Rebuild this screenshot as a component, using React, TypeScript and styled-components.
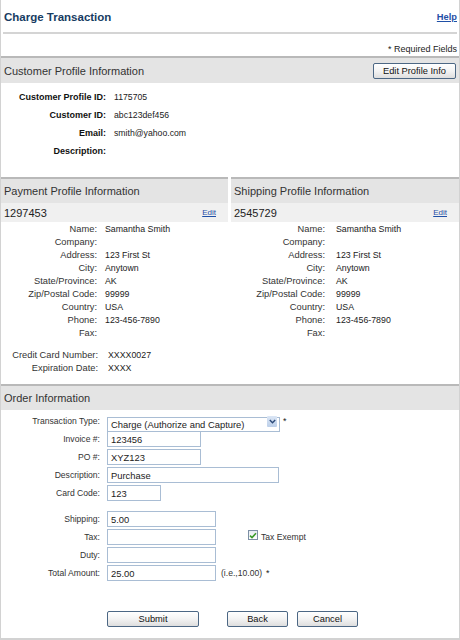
import React from "react";
import styled, { createGlobalStyle } from "styled-components";

const GlobalStyle = createGlobalStyle`
  html, body {
    margin: 0;
    padding: 0;
    background: #ffffff;
  }
  body {
    font-family: "Liberation Sans", Arial, sans-serif;
    color: #222;
  }
  * {
    box-sizing: border-box;
  }
`;

const Page = styled.div`
  width: 460px;
  height: 640px;
  border-left: 1px solid #d2d2d2;
  border-right: 1px solid #d2d2d2;
  border-bottom: 2px solid #d2d2d2;
  display: flex;
  flex-direction: column;
  overflow: hidden;
`;

const Header = styled.div`
  height: 32px;
  display: flex;
  align-items: center;
  justify-content: space-between;
  padding: 1px 2px 0 3px;
`;

const Title = styled.h1`
  margin: 0;
  font-size: 11.5px;
  font-weight: bold;
  color: #173c62;
`;

const HelpLink = styled.a`
  font-size: 9.3px;
  font-weight: bold;
  color: #1f4fa6;
  text-decoration: underline;
`;

const HeaderRule = styled.div`
  margin: 0 2px;
  height: 2px;
  background: #d4d4d4;
`;

const RequiredNote = styled.div`
  height: 22px;
  padding: 10px 2px 0 0;
  text-align: right;
  font-size: 9px;
  line-height: 11px;
  color: #222;
`;

const SectionBar = styled.div<{ $height?: number }>`
  height: ${(p) => p.$height ?? 27}px;
  border-top: 2px solid #b9b9b9;
  background: #e4e4e4;
  display: flex;
  align-items: center;
  justify-content: space-between;
  padding: 0 3px 0 3px;
  font-size: 11px;
  color: #333;
`;

const SubBar = styled.div`
  height: 19px;
  background: #f0f0f0;
  display: flex;
  align-items: center;
  justify-content: space-between;
  padding: 0 12px 0 3px;
  font-size: 11px;
  color: #222;
`;

const EditLink = styled.a`
  font-size: 8px;
  color: #1f4fa6;
  text-decoration: underline;
`;

const Button = styled.button<{ $width: number }>`
  width: ${(p) => p.$width}px;
  height: 16px;
  padding: 0;
  border: 1px solid #4c6784;
  border-radius: 2px;
  background: linear-gradient(#ffffff, #f3f3f3 50%, #dedede);
  font-family: "Liberation Sans", Arial, sans-serif;
  font-size: 9.3px;
  line-height: 14px;
  color: #111;
  cursor: pointer;
`;

const CustomerBlock = styled.div`
  height: 94px;
  padding-top: 5px;
  display: grid;
  grid-template-columns: 105px 1fr;
  grid-auto-rows: 18px;
  column-gap: 8px;
  align-items: center;
  align-content: start;
`;

const CustomerLabel = styled.div`
  text-align: right;
  font-size: 9px;
  font-weight: bold;
  color: #111;
`;

const CustomerValue = styled.div`
  font-size: 8.7px;
  color: #222;
`;

const Columns = styled.div`
  display: grid;
  grid-template-columns: 227px 1fr;
  column-gap: 3px;
`;

const Column = styled.div`
  display: flex;
  flex-direction: column;
`;

const DetailGrid = styled.div<{ $labelWidth: number; $gap: number }>`
  display: grid;
  grid-template-columns: ${(p) => p.$labelWidth}px 1fr;
  column-gap: ${(p) => p.$gap}px;
  grid-auto-rows: 13px;
  align-items: center;
`;

const DetailLabel = styled.div`
  text-align: right;
  font-size: 9.3px;
  color: #333;
  white-space: nowrap;
`;

const DetailValue = styled.div`
  font-size: 8.8px;
  color: #222;
  white-space: nowrap;
`;

const CardBlock = styled.div`
  padding: 9px 0 10px;
`;

const FormBlock = styled.div`
  padding-top: 3px;
  display: flex;
  flex-direction: column;
  gap: 2px;
`;

const FormRow = styled.div<{ $spaceBefore?: number }>`
  height: 16px;
  display: flex;
  align-items: center;
  margin-top: ${(p) => p.$spaceBefore ?? 0}px;
`;

const FormLabel = styled.label`
  width: 99px;
  margin-right: 7px;
  text-align: right;
  font-size: 8.6px;
  color: #333;
  white-space: nowrap;
`;

const TextInput = styled.input<{ $width: number }>`
  width: ${(p) => p.$width}px;
  height: 16px;
  margin: 0;
  padding: 0 3px;
  border: 1px solid #a9bdd4;
  border-radius: 0;
  background: #fff;
  font-family: "Liberation Sans", Arial, sans-serif;
  font-size: 9.4px;
  color: #222;
  outline: none;
`;

const SelectWrap = styled.div`
  position: relative;
  width: 173px;
  height: 15px;
`;

const Select = styled.select`
  appearance: none;
  width: 100%;
  height: 100%;
  margin: 0;
  padding: 0 0 0 3px;
  border: 1px solid #a9bdd4;
  border-radius: 0;
  background: #fff;
  font-family: "Liberation Sans", Arial, sans-serif;
  font-size: 9.4px;
  color: #222;
  outline: none;
`;

const SelectArrow = styled.span`
  position: absolute;
  top: 2px;
  right: 3px;
  width: 10px;
  height: 11px;
  background: linear-gradient(#dbe6f5, #bccfe9);
  border-radius: 1px;
  display: flex;
  align-items: center;
  justify-content: center;
  pointer-events: none;
`;

const Asterisk = styled.span<{ $left?: number }>`
  margin-left: ${(p) => p.$left ?? 3}px;
  font-size: 9px;
  color: #222;
`;

const Hint = styled.span`
  margin-left: 5px;
  font-size: 8.6px;
  color: #333;
`;

const CheckLabel = styled.label`
  margin-left: 32px;
  display: flex;
  align-items: center;
  gap: 3px;
  font-size: 8.6px;
  color: #333;
`;

const CheckBox = styled.span`
  width: 10px;
  height: 10px;
  margin-top: -4px;
  border: 1px solid #7d8fa5;
  background: linear-gradient(#e6ebf1, #ffffff);
  display: flex;
  align-items: center;
  justify-content: center;
`;

const ButtonRow = styled.div`
  margin-top: 30px;
  padding-left: 106px;
  display: flex;
  gap: 28px;
`;

const ButtonGroup = styled.div`
  display: flex;
  gap: 9px;
`;

type Pair = [string, string];

const addressRows: Pair[] = [
  ["Name:", "Samantha Smith"],
  ["Company:", ""],
  ["Address:", "123 First St"],
  ["City:", "Anytown"],
  ["State/Province:", "AK"],
  ["Zip/Postal Code:", "99999"],
  ["Country:", "USA"],
  ["Phone:", "123-456-7890"],
  ["Fax:", ""],
];

const customerRows: Pair[] = [
  ["Customer Profile ID:", "1175705"],
  ["Customer ID:", "abc123def456"],
  ["Email:", "smith@yahoo.com"],
  ["Description:", ""],
];

const Details: React.FC<{ rows: Pair[]; labelWidth: number; gap: number }> = ({
  rows,
  labelWidth,
  gap,
}) => (
  <DetailGrid $labelWidth={labelWidth} $gap={gap}>
    {rows.map(([label, value]) => (
      <React.Fragment key={label}>
        <DetailLabel>{label}</DetailLabel>
        <DetailValue>{value}</DetailValue>
      </React.Fragment>
    ))}
  </DetailGrid>
);

const App: React.FC = () => {
  return (
    <>
      <GlobalStyle />
      <Page>
        <Header>
          <Title>Charge Transaction</Title>
          <HelpLink href="#">Help</HelpLink>
        </Header>
        <HeaderRule />
        <RequiredNote>* Required Fields</RequiredNote>

        <SectionBar>
          <span>Customer Profile Information</span>
          <Button $width={83}>Edit Profile Info</Button>
        </SectionBar>
        <CustomerBlock>
          {customerRows.map(([label, value]) => (
            <React.Fragment key={label}>
              <CustomerLabel>{label}</CustomerLabel>
              <CustomerValue>{value}</CustomerValue>
            </React.Fragment>
          ))}
        </CustomerBlock>

        <Columns>
          <Column>
            <SectionBar $height={26}>
              <span>Payment Profile Information</span>
            </SectionBar>
            <SubBar>
              <span>1297453</span>
              <EditLink href="#">Edit</EditLink>
            </SubBar>
            <Details rows={addressRows} labelWidth={96} gap={8} />
            <CardBlock>
              <Details
                rows={[
                  ["Credit Card Number:", "XXXX0027"],
                  ["Expiration Date:", "XXXX"],
                ]}
                labelWidth={97}
                gap={10}
              />
            </CardBlock>
          </Column>
          <Column>
            <SectionBar $height={26}>
              <span>Shipping Profile Information</span>
            </SectionBar>
            <SubBar>
              <span>2545729</span>
              <EditLink href="#">Edit</EditLink>
            </SubBar>
            <Details rows={addressRows} labelWidth={94} gap={11} />
          </Column>
        </Columns>

        <SectionBar $height={26}>
          <span>Order Information</span>
        </SectionBar>
        <FormBlock>
          <FormRow>
            <FormLabel>Transaction Type:</FormLabel>
            <SelectWrap>
              <Select defaultValue="capture">
                <option value="capture">Charge (Authorize and Capture)</option>
                <option value="auth">Authorize Only</option>
              </Select>
              <SelectArrow>
                <svg width="7" height="5" viewBox="0 0 7 5">
                  <path
                    d="M0.8 1 L3.5 3.8 L6.2 1"
                    fill="none"
                    stroke="#2c4a78"
                    strokeWidth="1.4"
                  />
                </svg>
              </SelectArrow>
            </SelectWrap>
            <Asterisk>*</Asterisk>
          </FormRow>
          <FormRow>
            <FormLabel>Invoice #:</FormLabel>
            <TextInput $width={94} defaultValue="123456" />
          </FormRow>
          <FormRow>
            <FormLabel>PO #:</FormLabel>
            <TextInput $width={94} defaultValue="XYZ123" />
          </FormRow>
          <FormRow>
            <FormLabel>Description:</FormLabel>
            <TextInput $width={172} defaultValue="Purchase" />
          </FormRow>
          <FormRow>
            <FormLabel>Card Code:</FormLabel>
            <TextInput $width={54} defaultValue="123" />
          </FormRow>
          <FormRow $spaceBefore={8}>
            <FormLabel>Shipping:</FormLabel>
            <TextInput $width={109} defaultValue="5.00" />
          </FormRow>
          <FormRow>
            <FormLabel>Tax:</FormLabel>
            <TextInput $width={109} defaultValue="" />
            <CheckLabel>
              <CheckBox>
                <svg width="8" height="7" viewBox="0 0 8 7">
                  <path
                    d="M1 3.6 L3 5.6 L7 1.2"
                    fill="none"
                    stroke="#3a9a2a"
                    strokeWidth="1.6"
                  />
                </svg>
              </CheckBox>
              Tax Exempt
            </CheckLabel>
          </FormRow>
          <FormRow>
            <FormLabel>Duty:</FormLabel>
            <TextInput $width={109} defaultValue="" />
          </FormRow>
          <FormRow>
            <FormLabel>Total Amount:</FormLabel>
            <TextInput $width={109} defaultValue="25.00" />
            <Hint>(i.e.,10.00)</Hint>
            <Asterisk $left={4}>*</Asterisk>
          </FormRow>
        </FormBlock>

        <ButtonRow>
          <Button $width={92}>Submit</Button>
          <ButtonGroup>
            <Button $width={61}>Back</Button>
            <Button $width={61}>Cancel</Button>
          </ButtonGroup>
        </ButtonRow>
      </Page>
    </>
  );
};

export default App;
